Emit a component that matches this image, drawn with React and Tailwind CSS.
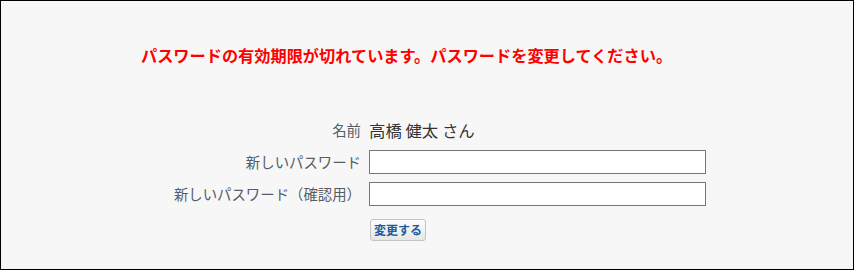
import React from "react";

function App() {
  const font = { fontFamily: '"Noto Sans CJK JP", "Noto Sans", sans-serif' };

  return (
    <div
      className="h-[270px] w-[854px] overflow-hidden border border-black bg-[#f7f7f7] pl-[140px]"
      style={font}
    >
      {/* message */}
      <p className="mt-[44px] text-[16.2px] font-bold leading-[20px] text-[#ff0000]">
        パスワードの有効期限が切れています。パスワードを変更してください。
      </p>

      {/* form */}
      <div className="mt-[54px] grid grid-cols-[220px_auto] items-center gap-x-[8px]">
        <div className="text-right text-[14.4px] leading-[22px] text-[#555d66]">名前</div>
        <div className="text-[16.4px] leading-[22px] text-[#333]">高橋 健太 さん</div>

        <div className="mt-[9px] text-right text-[14.4px] text-[#555d66]">新しいパスワード</div>
        <input
          type="password"
          className="mt-[9px] h-[24px] w-[337px] border border-[#767676] bg-white px-1 outline-none"
        />

        <div className="mt-[8px] text-right text-[14.4px] text-[#555d66]">新しいパスワード（確認用）</div>
        <input
          type="password"
          className="mt-[8px] h-[24px] w-[337px] border border-[#767676] bg-white px-1 outline-none"
        />

        <div />
        <div className="mt-[10px]">
          <button className="ml-[1px] h-[22px] w-[56px] rounded-[3px] border border-[#c4c4c4] bg-gradient-to-b from-[#fdfdfd] to-[#e6e6e6] text-[12px] font-bold leading-[20px] text-[#1d5c99]">
            変更する
          </button>
        </div>
      </div>
    </div>
  );
}

export default App;
